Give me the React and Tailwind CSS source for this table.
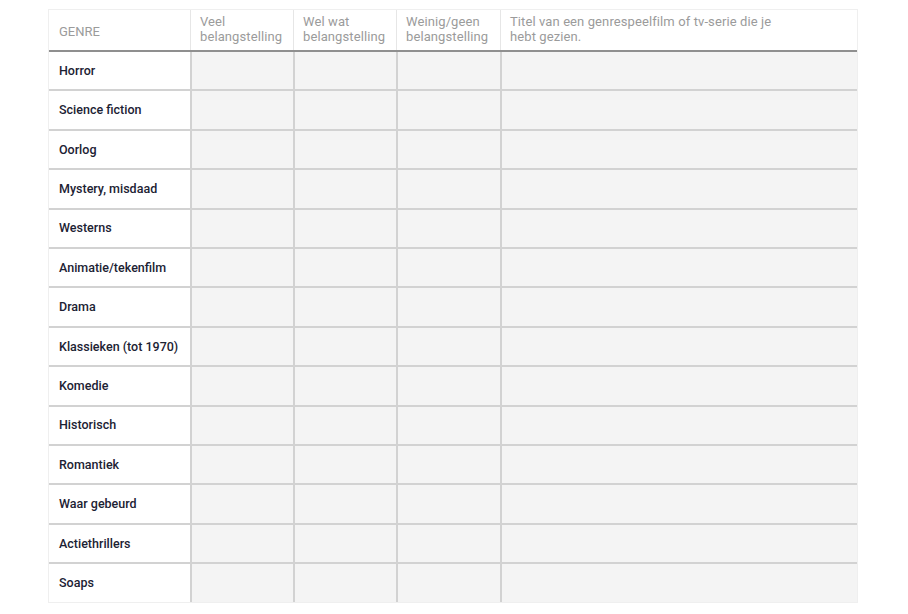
const GENRES = [
  'Horror',
  'Science fiction',
  'Oorlog',
  'Mystery, misdaad',
  'Westerns',
  'Animatie/tekenfilm',
  'Drama',
  'Klassieken (tot 1970)',
  'Komedie',
  'Historisch',
  'Romantiek',
  'Waar gebeurd',
  'Actiethrillers',
  'Soaps',
];

const HEADERS = [
  ['Veel', 'belangstelling'],
  ['Wel wat', 'belangstelling'],
  ['Weinig/geen', 'belangstelling'],
  ['Titel van een genrespeelfilm of tv-serie die je', 'hebt gezien.'],
];

const COLS = ['w-[142px]', 'w-[103px]', 'w-[103px]', 'w-[104px]', 'flex-1'];

export default function App() {
  return (
    <div className="min-h-screen bg-white pt-[9px] pl-[48px]" style={{ fontFamily: 'Roboto, "Liberation Sans", sans-serif' }}>
      <div className="w-[810px] border-x border-t border-[#efefef]">
        {/* kop */}
        <div className="flex h-[42px] border-b-2 border-[#8f8f8f] text-[13px] leading-[15px] text-[#9b9b9b]">
          <div className="w-[141px] flex items-center pl-[10px] pt-[3px]">GENRE</div>
          {HEADERS.map((h, i) => (
            <div key={i} className={`${COLS[i + 1]} border-l border-[#e6e6e6] pl-[9px] pt-[4px] tracking-[0.1px]`}>
              <div>{h[0]}</div>
              <div>{h[1]}</div>
            </div>
          ))}
        </div>

        {/* rijen */}
        {GENRES.map((g, idx) => (
          <div
            key={g}
            className={`flex h-[39.4px] ${idx < GENRES.length - 1 ? 'border-b-2 border-[#d2d2d2]' : 'border-b border-[#efefef]'}`}
          >
            <div className="w-[141px] flex items-center pl-[10px] pt-[1px] text-[12.5px] font-medium text-[#1c2233]">
              {g}
            </div>
            <div className="w-[103px] border-l-2 border-[#d2d2d2] bg-[#f4f4f4]" />
            <div className="w-[103px] border-l-2 border-[#d2d2d2] bg-[#f4f4f4]" />
            <div className="w-[104px] border-l-2 border-[#d2d2d2] bg-[#f4f4f4]" />
            <div className="flex-1 border-l-2 border-[#d2d2d2] bg-[#f4f4f4]" />
          </div>
        ))}
      </div>
    </div>
  );
}
